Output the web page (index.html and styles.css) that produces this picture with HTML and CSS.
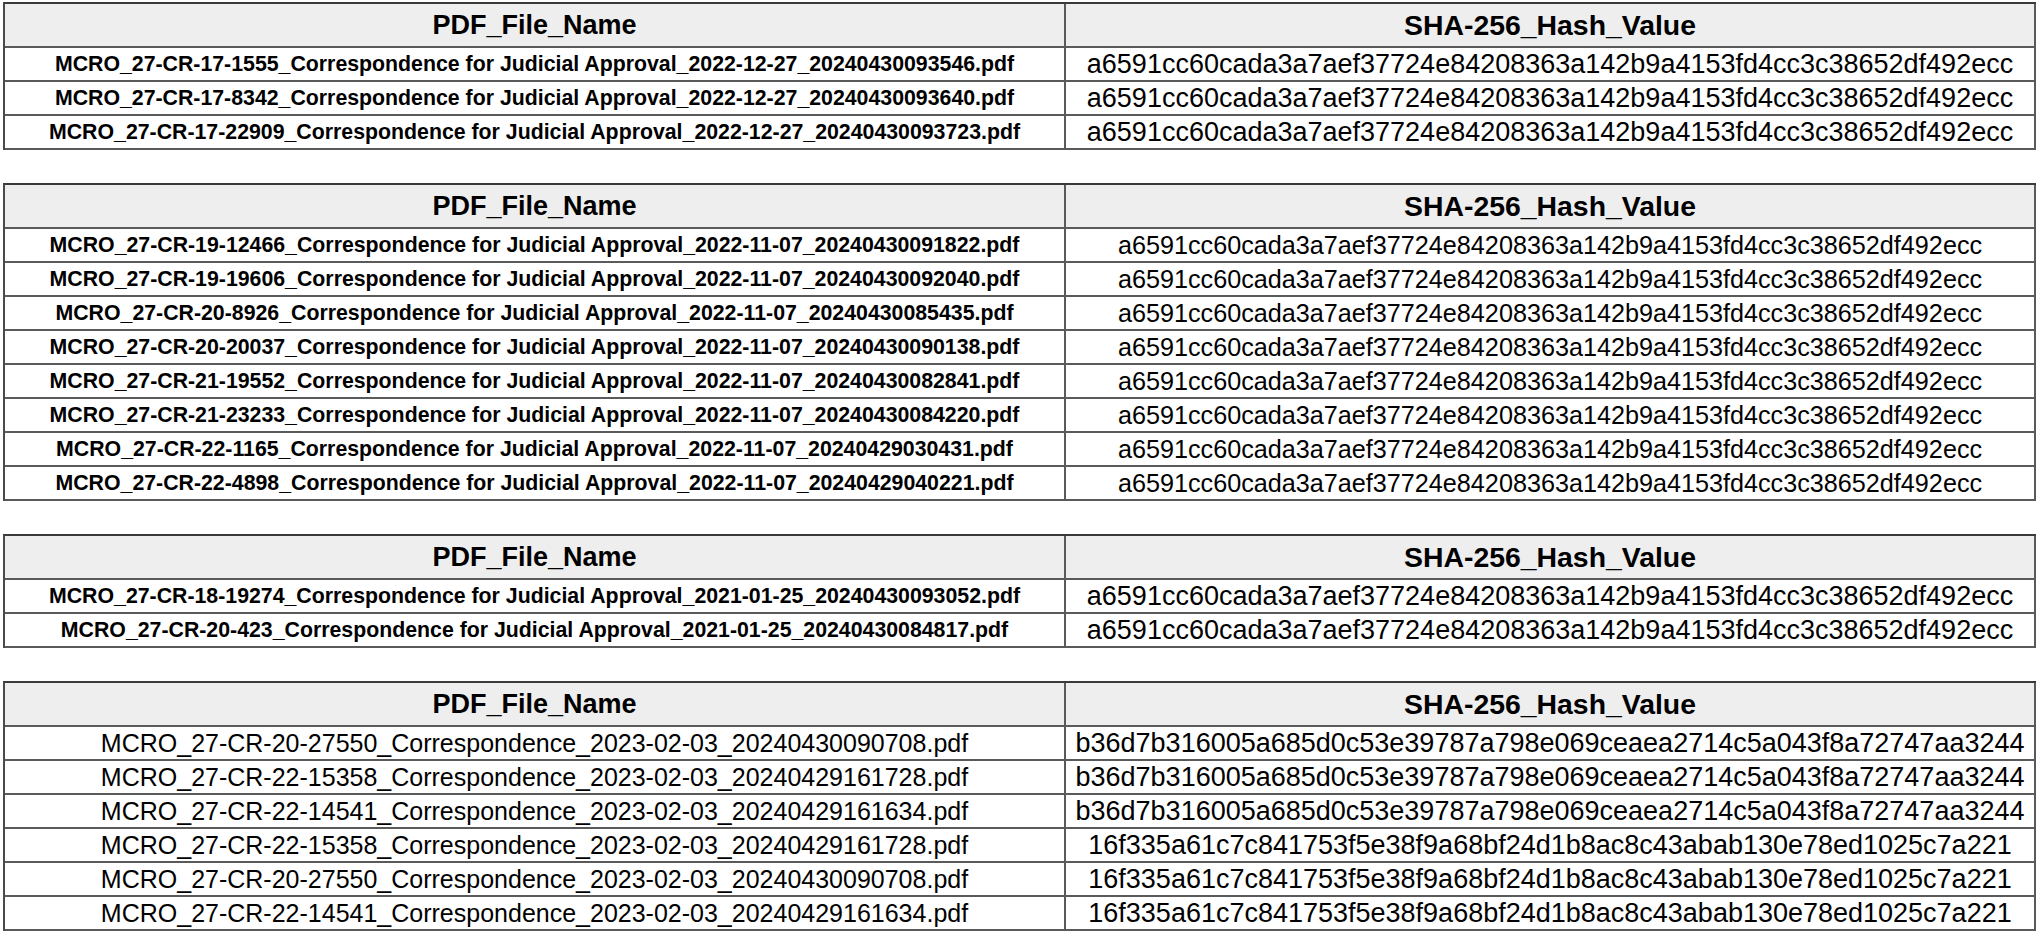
FILE: index.html
```html
<!DOCTYPE html>
<html lang="en">
<head>
<meta charset="utf-8">
<title>PDF hashes</title>
<link rel="stylesheet" href="styles.css">
</head>
<body>
<main class="page">
  <table class="hash-table">
    <colgroup><col class="col-name"><col class="col-hash"></colgroup>
    <thead><tr><th>PDF_File_Name</th><th class="hash-head">SHA-256_Hash_Value</th></tr></thead>
    <tbody class="bold-names">
      <tr><td>MCRO_27-CR-17-1555_Correspondence for Judicial Approval_2022-12-27_20240430093546.pdf</td><td>a6591cc60cada3a7aef37724e84208363a142b9a4153fd4cc3c38652df492ecc</td></tr>
      <tr><td>MCRO_27-CR-17-8342_Correspondence for Judicial Approval_2022-12-27_20240430093640.pdf</td><td>a6591cc60cada3a7aef37724e84208363a142b9a4153fd4cc3c38652df492ecc</td></tr>
      <tr><td>MCRO_27-CR-17-22909_Correspondence for Judicial Approval_2022-12-27_20240430093723.pdf</td><td>a6591cc60cada3a7aef37724e84208363a142b9a4153fd4cc3c38652df492ecc</td></tr>
    </tbody>
  </table>

  <table class="hash-table">
    <colgroup><col class="col-name"><col class="col-hash"></colgroup>
    <thead><tr><th>PDF_File_Name</th><th class="hash-head">SHA-256_Hash_Value</th></tr></thead>
    <tbody class="bold-names small-hash">
      <tr><td>MCRO_27-CR-19-12466_Correspondence for Judicial Approval_2022-11-07_20240430091822.pdf</td><td>a6591cc60cada3a7aef37724e84208363a142b9a4153fd4cc3c38652df492ecc</td></tr>
      <tr><td>MCRO_27-CR-19-19606_Correspondence for Judicial Approval_2022-11-07_20240430092040.pdf</td><td>a6591cc60cada3a7aef37724e84208363a142b9a4153fd4cc3c38652df492ecc</td></tr>
      <tr><td>MCRO_27-CR-20-8926_Correspondence for Judicial Approval_2022-11-07_20240430085435.pdf</td><td>a6591cc60cada3a7aef37724e84208363a142b9a4153fd4cc3c38652df492ecc</td></tr>
      <tr><td>MCRO_27-CR-20-20037_Correspondence for Judicial Approval_2022-11-07_20240430090138.pdf</td><td>a6591cc60cada3a7aef37724e84208363a142b9a4153fd4cc3c38652df492ecc</td></tr>
      <tr><td>MCRO_27-CR-21-19552_Correspondence for Judicial Approval_2022-11-07_20240430082841.pdf</td><td>a6591cc60cada3a7aef37724e84208363a142b9a4153fd4cc3c38652df492ecc</td></tr>
      <tr><td>MCRO_27-CR-21-23233_Correspondence for Judicial Approval_2022-11-07_20240430084220.pdf</td><td>a6591cc60cada3a7aef37724e84208363a142b9a4153fd4cc3c38652df492ecc</td></tr>
      <tr><td>MCRO_27-CR-22-1165_Correspondence for Judicial Approval_2022-11-07_20240429030431.pdf</td><td>a6591cc60cada3a7aef37724e84208363a142b9a4153fd4cc3c38652df492ecc</td></tr>
      <tr><td>MCRO_27-CR-22-4898_Correspondence for Judicial Approval_2022-11-07_20240429040221.pdf</td><td>a6591cc60cada3a7aef37724e84208363a142b9a4153fd4cc3c38652df492ecc</td></tr>
    </tbody>
  </table>

  <table class="hash-table">
    <colgroup><col class="col-name"><col class="col-hash"></colgroup>
    <thead><tr><th>PDF_File_Name</th><th class="hash-head">SHA-256_Hash_Value</th></tr></thead>
    <tbody class="bold-names">
      <tr><td>MCRO_27-CR-18-19274_Correspondence for Judicial Approval_2021-01-25_20240430093052.pdf</td><td>a6591cc60cada3a7aef37724e84208363a142b9a4153fd4cc3c38652df492ecc</td></tr>
      <tr><td>MCRO_27-CR-20-423_Correspondence for Judicial Approval_2021-01-25_20240430084817.pdf</td><td>a6591cc60cada3a7aef37724e84208363a142b9a4153fd4cc3c38652df492ecc</td></tr>
    </tbody>
  </table>

  <table class="hash-table">
    <colgroup><col class="col-name"><col class="col-hash"></colgroup>
    <thead><tr><th>PDF_File_Name</th><th class="hash-head">SHA-256_Hash_Value</th></tr></thead>
    <tbody class="plain-names">
      <tr><td>MCRO_27-CR-20-27550_Correspondence_2023-02-03_20240430090708.pdf</td><td>b36d7b316005a685d0c53e39787a798e069ceaea2714c5a043f8a72747aa3244</td></tr>
      <tr><td>MCRO_27-CR-22-15358_Correspondence_2023-02-03_20240429161728.pdf</td><td>b36d7b316005a685d0c53e39787a798e069ceaea2714c5a043f8a72747aa3244</td></tr>
      <tr><td>MCRO_27-CR-22-14541_Correspondence_2023-02-03_20240429161634.pdf</td><td>b36d7b316005a685d0c53e39787a798e069ceaea2714c5a043f8a72747aa3244</td></tr>
      <tr><td>MCRO_27-CR-22-15358_Correspondence_2023-02-03_20240429161728.pdf</td><td>16f335a61c7c841753f5e38f9a68bf24d1b8ac8c43abab130e78ed1025c7a221</td></tr>
      <tr><td>MCRO_27-CR-20-27550_Correspondence_2023-02-03_20240430090708.pdf</td><td>16f335a61c7c841753f5e38f9a68bf24d1b8ac8c43abab130e78ed1025c7a221</td></tr>
      <tr><td>MCRO_27-CR-22-14541_Correspondence_2023-02-03_20240429161634.pdf</td><td>16f335a61c7c841753f5e38f9a68bf24d1b8ac8c43abab130e78ed1025c7a221</td></tr>
    </tbody>
  </table>
</main>
</body>
</html>
```

FILE: styles.css
```css
* { box-sizing: border-box; }

html, body {
  margin: 0;
  padding: 0;
  background: #ffffff;
}

body {
  font-family: "Liberation Sans", Arial, sans-serif;
  color: #000000;
}

.page {
  display: flex;
  flex-direction: column;
  align-items: flex-start;
  gap: 33px;
  padding: 2px 0 0 3px;
}

.hash-table {
  border-collapse: separate;
  border-spacing: 0;
  table-layout: fixed;
  width: 2033px;
  border-top: 2px solid #3a3a3a;
  border-left: 2px solid #4a4a4a;
}

.col-name { width: 1061px; }
.col-hash { width: 970px; }

.hash-table th,
.hash-table td {
  border-right: 2px solid #5a5a5a;
  border-bottom: 2px solid #5a5a5a;
  padding: 0;
  text-align: center;
  vertical-align: middle;
  white-space: nowrap;
  overflow: hidden;
  line-height: 1;
}

.hash-table th {
  background: #eeeeee;
  font-weight: bold;
  font-size: 27px;
  height: 44px;
  padding-top: 1px;
}

.hash-table th.hash-head {
  font-size: 28.4px;
}

.hash-table td {
  height: 34px;
  font-size: 27px;
  padding-top: 1px;
}

.bold-names td:first-child {
  font-weight: bold;
  font-size: 21.3px;
}

.small-hash td:last-child {
  font-size: 25.2px;
}

.plain-names td:first-child {
  font-size: 25px;
}
```
